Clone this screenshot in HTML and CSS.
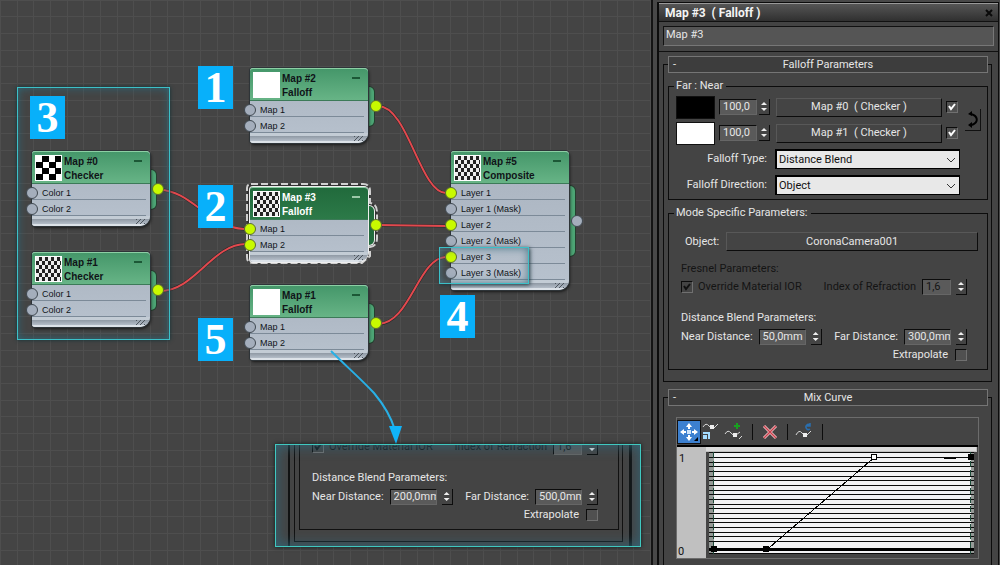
FILE: index.html
```
<!DOCTYPE html>
<html lang="en">
<head>
    <meta charset="UTF-8">
    <meta name="viewport" content="width=device-width, initial-scale=1.0">
    <title>Map #3 ( Falloff )</title>
    <link rel="stylesheet" href="styles.css">
</head>
<body>
    <main class="canvas">
        <!-- Wires -->
        <svg class="layer" aria-hidden="true">
            <g class="wire-shadow">
                <path d="M160 190C190 190 210 228 244 229M160 291C195 291 212 244 246 244M378 106C408 106 420 193 446 193M378 225L446 226M378 324C410 324 418 258 446 257"/>
            </g>
            <g class="wire">
                <path d="M160 190C190 190 210 228 244 229M160 291C195 291 212 244 246 244M378 106C408 106 420 193 446 193M378 225L446 226M378 324C410 324 418 258 446 257"/>
            </g>
        </svg>

        <div class="highlight highlight-checkers"></div>

        <!-- Nodes -->
        <article class="node node-map0">
            <span class="tab"></span>
            <div class="node-body">
                <header class="node-head">
                    <span class="thumb checks"></span>
                    <h2>Map #0<br>Checker</h2>
                    <button class="collapse" aria-label="Collapse"></button>
                </header>
                <ul>
                    <li><i class="socket"></i>Color 1</li>
                    <li><i class="socket"></i>Color 2</li>
                </ul>
                <div class="node-foot"></div>
            </div>
            <i class="socket out on"></i>
        </article>

        <article class="node node-map1">
            <span class="tab"></span>
            <div class="node-body">
                <header class="node-head">
                    <span class="thumb checks fine"></span>
                    <h2>Map #1<br>Checker</h2>
                    <button class="collapse" aria-label="Collapse"></button>
                </header>
                <ul>
                    <li><i class="socket"></i>Color 1</li>
                    <li><i class="socket"></i>Color 2</li>
                </ul>
                <div class="node-foot"></div>
            </div>
            <i class="socket out on"></i>
        </article>

        <article class="node node-map2">
            <span class="tab"></span>
            <div class="node-body">
                <header class="node-head">
                    <span class="thumb"></span>
                    <h2>Map #2<br>Falloff</h2>
                    <button class="collapse" aria-label="Collapse"></button>
                </header>
                <ul>
                    <li><i class="socket"></i>Map 1</li>
                    <li><i class="socket"></i>Map 2</li>
                </ul>
                <div class="node-foot"></div>
            </div>
            <i class="socket out on"></i>
        </article>

        <article class="node node-map3 selected">
            <svg class="outline" viewBox="0 0 134 84" aria-hidden="true">
                <path d="M6 2H118Q125 2 125 9V21Q132 22 132 30V56Q132 64 125 65V74L117 81H8Q2 81 2 75V6Q2 2 6 2Z"/>
            </svg>
            <span class="tab"></span>
            <div class="node-body">
                <header class="node-head">
                    <span class="thumb checks fine"></span>
                    <h2>Map #3<br>Falloff</h2>
                    <button class="collapse" aria-label="Collapse"></button>
                </header>
                <ul>
                    <li><i class="socket on"></i>Map 1</li>
                    <li><i class="socket on"></i>Map 2</li>
                </ul>
                <div class="node-foot"></div>
            </div>
            <i class="socket out on"></i>
        </article>

        <article class="node node-map1b">
            <span class="tab"></span>
            <div class="node-body">
                <header class="node-head">
                    <span class="thumb"></span>
                    <h2>Map #1<br>Falloff</h2>
                    <button class="collapse" aria-label="Collapse"></button>
                </header>
                <ul>
                    <li><i class="socket"></i>Map 1</li>
                    <li><i class="socket"></i>Map 2</li>
                </ul>
                <div class="node-foot"></div>
            </div>
            <i class="socket out on"></i>
        </article>

        <article class="node node-map5 tall">
            <span class="tab"></span>
            <div class="node-body">
                <header class="node-head">
                    <span class="thumb checks fine"></span>
                    <h2>Map #5<br>Composite</h2>
                    <button class="collapse" aria-label="Collapse"></button>
                </header>
                <ul>
                    <li><i class="socket on"></i>Layer 1</li>
                    <li><i class="socket"></i>Layer 1 (Mask)</li>
                    <li><i class="socket on"></i>Layer 2</li>
                    <li><i class="socket"></i>Layer 2 (Mask)</li>
                    <li><i class="socket on"></i>Layer 3</li>
                    <li><i class="socket"></i>Layer 3 (Mask)</li>
                </ul>
                <div class="node-foot"></div>
            </div>
            <i class="socket out"></i>
        </article>

        <div class="highlight highlight-layer"></div>

        <!-- Step numbers -->
        <span class="badge badge-1">1</span>
        <span class="badge badge-2">2</span>
        <span class="badge badge-3">3</span>
        <span class="badge badge-4">4</span>
        <span class="badge badge-5">5</span>

        <!-- Cut-out of the second falloff's parameters -->
        <section class="callout">
            <div class="callout-rails">
                <div class="callout-rollup">
                    <div class="callout-group">
                        <div class="row off">
                            <label class="check"><input type="checkbox" checked disabled>Override Material IOR</label>
                            <label class="field">Index of Refraction
                                <span class="spinner"><input class="short" type="text" value="1,6" disabled><span class="arrows"><button aria-label="Up"></button><button aria-label="Down"></button></span></span>
                            </label>
                        </div>
                        <h3 class="distance-title">Distance Blend Parameters:</h3>
                        <div class="row">
                            <label class="field">Near Distance:
                                <span class="spinner"><input type="text" value="200,0mm"><span class="arrows"><button aria-label="Up"></button><button aria-label="Down"></button></span></span>
                            </label>
                            <label class="field">Far Distance:
                                <span class="spinner"><input type="text" value="500,0mm"><span class="arrows"><button aria-label="Up"></button><button aria-label="Down"></button></span></span>
                            </label>
                        </div>
                        <label class="extrapolate">Extrapolate<input type="checkbox"></label>
                    </div>
                </div>
            </div>
        </section>

        <svg class="layer" aria-hidden="true">
            <path class="arrow-line" d="M331 351C346 366 361 379 374 393C384 405 391 417 395 430"/>
            <path class="arrow-head" d="M389 426H402L396 444Z"/>
        </svg>
    </main>

    <aside class="panel">
        <div class="window">
            <header class="titlebar">
                <h1>Map #3&nbsp; ( Falloff )</h1>
                <button class="close" aria-label="Close">
                    <svg viewBox="0 0 8 8" width="8" height="8"><path d="M1 1L7 7M7 1L1 7"/></svg>
                </button>
            </header>
            <div class="name-row">
                <input class="name" type="text" value="Map #3" aria-label="Map name">
            </div>

            <div class="rollups">
                <fieldset class="rollup">
                    <legend><button class="rollup-head"><span>-</span>Falloff Parameters</button></legend>

                    <fieldset class="group">
                        <legend>Far : Near</legend>
                        <div class="maps">
                            <div class="map-rows">
                                <div class="map-row">
                                    <button class="swatch black" aria-label="Far color"></button>
                                    <span class="spinner"><input class="amount" type="text" value="100,0" aria-label="Far amount"><span class="arrows"><button aria-label="Up"></button><button aria-label="Down"></button></span></span>
                                    <button class="map-button">Map #0&nbsp; ( Checker )</button>
                                    <input type="checkbox" checked aria-label="Use far map">
                                </div>
                                <div class="map-row">
                                    <button class="swatch white" aria-label="Near color"></button>
                                    <span class="spinner"><input class="amount" type="text" value="100,0" aria-label="Near amount"><span class="arrows"><button aria-label="Up"></button><button aria-label="Down"></button></span></span>
                                    <button class="map-button">Map #1&nbsp; ( Checker )</button>
                                    <input type="checkbox" checked aria-label="Use near map">
                                </div>
                            </div>
                            <button class="swap" aria-label="Swap">
                                <svg viewBox="0 0 16 22" width="16" height="22">
                                    <path class="stroke" d="M6 5C13 7 14 13 7 16"/>
                                    <path d="M3 5L7 2V7ZM3 16L7 13V19Z"/>
                                </svg>
                            </button>
                        </div>
                        <div class="select-row">
                            <label for="type">Falloff Type:</label>
                            <select id="type"><option>Distance Blend</option></select>
                        </div>
                        <div class="select-row">
                            <label for="direction">Falloff Direction:</label>
                            <select id="direction"><option>Object</option></select>
                        </div>
                    </fieldset>

                    <fieldset class="group mode">
                        <legend>Mode Specific Parameters:</legend>
                        <div class="object-row">
                            <span>Object:</span>
                            <button class="map-button">CoronaCamera001</button>
                        </div>
                        <h3 class="off">Fresnel Parameters:</h3>
                        <div class="row off">
                            <label class="check"><input type="checkbox" checked disabled>Override Material IOR</label>
                            <label class="field">Index of Refraction
                                <span class="spinner"><input class="short" type="text" value="1,6" disabled><span class="arrows"><button aria-label="Up"></button><button aria-label="Down"></button></span></span>
                            </label>
                        </div>
                        <h3 class="distance-title">Distance Blend Parameters:</h3>
                        <div class="row">
                            <label class="field">Near Distance:
                                <span class="spinner"><input type="text" value="50,0mm"><span class="arrows"><button aria-label="Up"></button><button aria-label="Down"></button></span></span>
                            </label>
                            <label class="field">Far Distance:
                                <span class="spinner"><input type="text" value="300,0mm"><span class="arrows"><button aria-label="Up"></button><button aria-label="Down"></button></span></span>
                            </label>
                        </div>
                        <label class="extrapolate">Extrapolate<input type="checkbox"></label>
                    </fieldset>
                </fieldset>

                <fieldset class="rollup">
                    <legend><button class="rollup-head"><span>-</span>Mix Curve</button></legend>
                    <div class="curve">
                        <div class="toolbar">
                            <button class="tool active" aria-label="Move">
                                <svg viewBox="0 0 22 22" width="22" height="22">
                                    <path fill="#fff" d="M11 2L14 6H12V8H10V6H8ZM11 20L8 16H10V14H12V16H14ZM2 11L6 8V10H8V12H6V14ZM20 11L16 14V12H14V10H16V8Z"/>
                                    <rect x="9" y="9" width="4" height="4" fill="#cfe4fa"/>
                                    <path fill="#000" d="M20 16V20H16Z"/>
                                </svg>
                            </button>
                            <button class="tool" aria-label="Scale">
                                <svg viewBox="0 0 22 22" width="22" height="22">
                                    <path class="squiggle" d="M2 6Q5 1 8 5T13 7L17 3"/>
                                    <rect x="9" y="4" width="4" height="4" fill="#eee"/>
                                    <path fill="#a5dcff" d="M2 11H9V18H7V13H2ZM2 14H6V18H2Z"/>
                                </svg>
                            </button>
                            <button class="tool" aria-label="Add point">
                                <svg viewBox="0 0 22 22" width="22" height="22">
                                    <path class="squiggle" d="M1 13Q4 8 7 12T12 14L16 11M15 18L18 15"/>
                                    <rect x="9" y="12" width="4" height="4" fill="#eee"/>
                                    <path fill="#18a020" d="M12 2H14V4H16V6H14V8H12V6H10V4H12Z"/>
                                </svg>
                            </button>
                            <i class="divider"></i>
                            <button class="tool" aria-label="Delete point">
                                <svg viewBox="0 0 22 22" width="22" height="22">
                                    <path d="M5 5L17 17M17 5L5 17" stroke="#f2c4c8" stroke-width="3"/>
                                    <path d="M5 5L17 17M17 5L5 17" stroke="#c8404c" stroke-width="1.4"/>
                                </svg>
                            </button>
                            <i class="divider"></i>
                            <button class="tool" aria-label="Reset curve">
                                <svg viewBox="0 0 22 22" width="22" height="22">
                                    <path class="squiggle" d="M2 14Q5 8 8 12T13 14L17 10"/>
                                    <rect x="9" y="12" width="4" height="4" fill="#eee"/>
                                    <path d="M16 8A2.500 2.500 0 1 1 16 4M16 2V5H13" fill="none" stroke="#2a6faf" stroke-width="1.500"/>
                                </svg>
                            </button>
                            <i class="divider"></i>
                        </div>
                        <svg class="plot" viewBox="0 0 300 111" shape-rendering="crispEdges" role="img" aria-label="Mix curve">
                            <path fill="#c0c0c0" d="M0 0H299V5H29V111H0Z"/>
                            <path fill="#444" d="M29 5H299V0H300V111H29Z"/>
                            <rect x="29" y="0" width="269" height="4" fill="#dcdcdc"/>
                            <rect x="32" y="5" width="264" height="102" fill="#f2f2f4"/>
                            <rect x="32" y="5" width="5" height="102" fill="#959a97"/>
                            <rect x="293" y="5" width="3" height="102" fill="#959a97"/>
                            <path stroke="#0a0a0a" d="M32 5.500h264m-264 5h264m-264 5h264m-264 4h264m-264 5h264m-264 5h264m-264 4h264m-264 5h264m-264 5h264m-264 4h264m-264 5h264m-264 5h264m-264 4h264m-264 5h264m-264 5h264m-264 4h264m-264 5h264m-264 5h264m-264 4h264m-264 5h264m-264 12h264"/>
                            <path stroke="#1c4a38" stroke-dasharray="6 3" d="M36.500 5V107M292.500 5V107"/>
                            <rect x="32" y="101" width="264" height="3" fill="#000"/>
                            <path stroke="#000" d="M90 102L196 11M266 11.500H278"/>
                            <path fill="#000" d="M34 99h6v6h-6zM86 99h6v6h-6zM290 7h6v6h-6z"/>
                            <rect x="193.500" y="7.500" width="5" height="5" fill="#fff" stroke="#000"/>
                            <text x="2" y="15">1</text>
                            <text x="1" y="108">0</text>
                        </svg>
                    </div>
                </fieldset>
            </div>
        </div>
    </aside>
</body>
</html>
```
FILE: styles.css
```
* {
    margin: 0;
    padding: 0;
    box-sizing: border-box;
}

body {
    display: flex;
    height: 100vh;
    overflow: hidden;
    background: #444;
    color: #e6e6e6;
    font-family: Roboto, Tahoma, sans-serif;
    font-size: 11px;
    line-height: 12px;
}

button,
input,
select {
    font: inherit;
    color: inherit;
    background: none;
    border: 0;
    border-radius: 0;
}

h1,
h2,
h3 {
    font-size: inherit;
    font-weight: normal;
}

/* Node canvas */
.canvas {
    flex: 1;
    position: relative;
    overflow: hidden;
    background-color: #444;
    background-image:
        linear-gradient(to right, #4e4e4e 1px, transparent 1px),
        linear-gradient(to right, #4e4e4e 1px, transparent 1px),
        linear-gradient(to right, #4e4e4e 1px, transparent 1px),
        linear-gradient(#4e4e4e 1px, transparent 1px),
        linear-gradient(#4e4e4e 1px, transparent 1px),
        linear-gradient(#4e4e4e 1px, transparent 1px);
    background-size: 50px 50px;
    background-position: 0 0, 17px 0, 33px 0, 0 0, 0 16px, 0 33px;
}

.layer {
    position: absolute;
    inset: 0;
    width: 100%;
    height: 100%;
    fill: none;
    pointer-events: none;
}

.wire-shadow {
    stroke: #26292a;
    stroke-width: 3;
}

.wire {
    stroke: #e2494e;
    stroke-width: 2;
}

.arrow-line {
    stroke: #28b0e6;
    stroke-width: 2;
}

.arrow-head {
    fill: #10b4fa;
}

.node {
    position: absolute;
    width: 118px;
    color: #101418;
    font-family: "Liberation Sans", Arial, sans-serif;
}

.node-map0 { left: 32px; top: 151px; }
.node-map1 { left: 32px; top: 252px; }
.node-map2 { left: 250px; top: 68px; }
.node-map3 { left: 250px; top: 187px; }
.node-map1b { left: 250px; top: 285px; }
.node-map5 { left: 451px; top: 151px; }

.node-body {
    position: relative;
    background: linear-gradient(#a9b3bf, #b8c2ce);
    border-radius: 3px 4px 10px 3px;
    box-shadow: 0 0 0 1px #2e3438, 1px 2px 3px #181818;
}

.node-head {
    display: flex;
    gap: 2px;
    height: 33px;
    padding: 3px 8px 0 3px;
    border-top: 1px solid #8ccfa4;
    border-bottom: 1px solid #3c7a58;
    border-radius: 3px 4px 0 0;
    background: linear-gradient(#45976a, #67b486);
}

.node-head h2 {
    flex: 1;
    font-size: 10px;
    font-weight: bold;
    line-height: 14px;
}

.thumb {
    width: 27px;
    height: 26px;
    border: 1px solid #fff;
    background: #fff;
}

.checks {
    background: conic-gradient(#000 25%, #fff 0 50%, #000 0 75%, #fff 0) 0 0 / 13px 12px;
}

.checks.fine {
    background: conic-gradient(#222 25%, #eee 0 50%, #222 0 75%, #eee 0) 0 0 / 6px 8px;
}

.collapse {
    width: 8px;
    height: 2px;
    margin-top: 5px;
    background: #1c5836;
}

.node ul {
    list-style: none;
}

.node li {
    position: relative;
    height: 16px;
    margin-right: 4px;
    padding-left: 10px;
    border-bottom: 1px solid #7c8a98;
    font-size: 9px;
    line-height: 18px;
}

.node-foot {
    height: 10px;
    border-top: 3px solid #c3ccd5;
    border-radius: 0 0 10px 3px;
    background:
        repeating-linear-gradient(135deg, #4c545c 0 1px, transparent 1px 3px) right 5px top 0 / 9px 5px no-repeat,
        linear-gradient(#8f99a4, #b4bdc8 5px, #dce2e8 5px);
}

.socket {
    position: absolute;
    left: -6px;
    top: 3px;
    width: 12px;
    height: 12px;
    border: 1px solid #3f4850;
    border-radius: 50%;
    background: #a4aebc;
}

.socket.on {
    background: #c8fa00;
    border-color: #5a6c30;
}

.socket.out {
    left: auto;
    right: -14px;
    top: 32px;
}

.tall .socket.out {
    top: 64px;
}

.tab {
    position: absolute;
    left: 110px;
    top: 19px;
    width: 14px;
    height: 39px;
    border-radius: 5px;
    background: #4ca474;
    box-shadow: 0 0 0 1px #24402f;
}

.tall .tab {
    top: 35px;
    height: 70px;
}

.selected .node-head {
    color: #fff;
    background: linear-gradient(#216a3c, #2c7a48);
}

.selected .node-body,
.selected .tab {
    box-shadow: 0 0 0 1px #eee;
}

.selected .tab {
    background: #216a3c;
}

.selected .collapse {
    background: #9cc8a8;
}

.outline {
    position: absolute;
    left: -5px;
    top: -5px;
    width: 134px;
    height: 84px;
    fill: #333;
    stroke: #d0d0d0;
    stroke-width: 2;
    stroke-dasharray: 7 3;
}

.highlight {
    position: absolute;
    border: 1px solid #3cc0c8;
    box-shadow: inset 0 0 9px #2c6878, 0 0 4px #123238;
}

.highlight-checkers {
    left: 17px;
    top: 87px;
    width: 153px;
    height: 253px;
}

.highlight-layer {
    left: 439px;
    top: 247px;
    width: 90px;
    height: 37px;
    box-shadow: inset 0 0 8px #4c7888, 1px 1px 4px #203840;
}

.badge {
    position: absolute;
    width: 35px;
    height: 43px;
    background: #08b0fa;
    color: #fff;
    font: bold 44px/43px "Liberation Serif", "Times New Roman", serif;
    text-align: center;
}

.badge-1 { left: 198px; top: 66px; }
.badge-2 { left: 198px; top: 185px; }
.badge-3 { left: 30px; top: 96px; }
.badge-4 { left: 440px; top: 295px; }
.badge-5 { left: 198px; top: 318px; }

.callout {
    position: absolute;
    left: 275px;
    top: 444px;
    width: 366px;
    height: 103px;
    padding: 0 8px 0 12px;
    display: flex;
    flex-direction: column;
    justify-content: flex-end;
    overflow: hidden;
    background: #444;
    border: 1px solid #40c8c0;
    box-shadow: 0 0 4px #101c1c;
}

.callout::after {
    content: "";
    position: absolute;
    inset: 0;
    box-shadow: inset 0 0 14px #30687c;
    pointer-events: none;
}

.callout-rails {
    padding: 0 6px 4px 4px;
    border: solid #111;
    border-width: 0 3px 0 2px;
}

.callout-rollup {
    padding: 0 3px 11px 4px;
    border: 1px solid #111;
    border-top: 0;
}

.callout-group {
    padding: 0 20px 8px 12px;
    border: 1px solid #111;
    border-top: 0;
}

/* Parameter panel */
.panel {
    flex: 0 0 349px;
    padding: 2px 1px 0 4px;
    border-left: 2px solid #141414;
    background: #484848;
}

.window {
    height: 100%;
    overflow: hidden;
    border: solid #0c0c0c;
    border-width: 1px 1px 0 2px;
    background: #444;
}

.titlebar {
    display: flex;
    justify-content: space-between;
    align-items: center;
    height: 19px;
    padding: 0 5px 0 6px;
    border-top: 1px solid #999;
    border-bottom: 1px solid #111;
    background: linear-gradient(#555, #303030);
}

.titlebar h1 {
    font-size: 12px;
    font-weight: bold;
    color: #f4f4f4;
}

.close {
    width: 8px;
    height: 8px;
    line-height: 0;
}

.close path {
    stroke: #0a0a0a;
    stroke-width: 2;
}

.name-row {
    padding: 4px 4px 5px;
    border-bottom: 1px solid #111;
}

.name {
    display: block;
    width: 100%;
    height: 20px;
    padding: 0 2px 3px;
    background: #555;
    border: 1px solid;
    border-color: #111 #777 #777 #111;
}

.rollups {
    padding: 4px 6px 0 4px;
}

.rollup {
    padding: 7px 3px 11px 4px;
    border: 1px solid #0c0c0c;
    margin-bottom: 7px;
}

.rollup > legend {
    width: 100%;
}

.rollup-head {
    position: relative;
    display: block;
    width: 100%;
    height: 17px;
    border: 1px solid #757575;
    background: #3d3d3d;
    text-align: center;
    line-height: 14px;
}

.rollup-head span {
    position: absolute;
    left: 4px;
}

.group {
    padding: 2px 6px 1px 7px;
    border: 1px solid #0c0c0c;
}

.group > legend {
    padding: 0 3px 0 2px;
    margin-left: -2px;
}

.maps {
    display: flex;
    align-items: center;
    gap: 7px;
}

.map-rows {
    flex: 1;
}

.map-row {
    display: flex;
    align-items: center;
    gap: 4px;
    height: 26px;
}

.swatch {
    width: 39px;
    height: 23px;
    border: 1px solid #111;
}

.black {
    background: #000;
}

.white {
    background: #fff;
}

.map-button {
    flex: 1;
    height: 19px;
    border: 1px solid;
    border-color: #585858 #0c0c0c #0c0c0c #585858;
    line-height: 16px;
}

.map-row .map-button {
    margin-left: 2px;
}

.swap {
    width: 16px;
    height: 22px;
    border-right: 1px solid #111;
    border-bottom: 1px solid #111;
}

.swap svg {
    display: block;
}

.swap .stroke {
    fill: none;
    stroke: #000;
    stroke-width: 2;
}

.spinner {
    display: inline-flex;
    align-items: center;
    gap: 2px;
}

.spinner input {
    width: 47px;
    height: 16px;
    padding: 0 0 1px 3px;
    background: #5a5a5a;
    border: 1px solid;
    border-color: #0c0c0c #666 #666 #0c0c0c;
}

.spinner .amount {
    width: 38px;
}

.spinner .short {
    width: 29px;
}

.field .spinner {
    gap: 5px;
}

.arrows {
    display: flex;
    flex-direction: column;
    align-items: center;
    justify-content: space-between;
    width: 11px;
    height: 16px;
    padding: 3px 0;
    border: solid #0c0c0c;
    border-width: 0 1px 1px 0;
}

.arrows button {
    width: 6px;
    height: 3px;
    background: #eee;
    clip-path: polygon(50% 0, 100% 100%, 0 100%);
}

.arrows button:last-child {
    clip-path: polygon(0 0, 100% 0, 50% 100%);
}

input[type="checkbox"] {
    appearance: none;
    flex: none;
    width: 12px;
    height: 12px;
    background: #505050;
    border: 1px solid;
    border-color: #0c0c0c #707070 #707070 #0c0c0c;
}

input[type="checkbox"]:checked {
    background: #505050 url("data:image/svg+xml,%3Csvg xmlns='http://www.w3.org/2000/svg' viewBox='0 0 10 10'%3E%3Cpath d='M2 4L4 7L8 2' fill='none' stroke='%23fff' stroke-width='2'/%3E%3C/svg%3E");
}

input[type="checkbox"]:disabled {
    background: url("data:image/svg+xml,%3Csvg xmlns='http://www.w3.org/2000/svg' viewBox='0 0 10 10'%3E%3Cpath d='M2 4L4 7L8 2' fill='none' stroke='%23111' stroke-width='2'/%3E%3C/svg%3E");
}

.select-row {
    display: flex;
    align-items: center;
    gap: 8px;
    height: 26px;
    padding-right: 21px;
}

.select-row label {
    width: 91px;
    text-align: right;
}

.select-row select {
    flex: 1;
    height: 20px;
    padding: 0 2px;
    appearance: none;
    border: 2px solid #000;
    border-width: 2px 1px 1px 2px;
    color: #111;
    background: #e8e8e8 url("data:image/svg+xml,%3Csvg xmlns='http://www.w3.org/2000/svg' width='10' height='6'%3E%3Cpath d='M1 1L5 5L9 1' fill='none' stroke='%23333'/%3E%3C/svg%3E") right 3px center no-repeat;
}

.mode {
    margin-top: 7px;
    padding: 13px 20px 8px 12px;
}

.mode > legend {
    margin-left: -7px;
}

.object-row {
    display: flex;
    align-items: center;
    gap: 7px;
    margin: 0 -11px 12px 4px;
}

.row {
    display: flex;
    align-items: center;
    justify-content: space-between;
    height: 16px;
}

.off {
    color: #141414;
}

h3.off {
    margin-bottom: 4px;
}

.distance-title {
    margin: 17px 0 5px;
}

.check,
.field,
.extrapolate {
    display: flex;
    align-items: center;
    gap: 6px;
}

.check {
    gap: 5px;
}

.extrapolate {
    justify-content: flex-end;
    gap: 7px;
    margin-top: 4px;
}

.curve {
    margin: 4px 9px 12px 8px;
    border: 1px solid #6c6c6c;
}

.toolbar {
    display: flex;
    align-items: center;
    gap: 1px;
    height: 29px;
    padding: 0 1px;
    border-bottom: 2px solid #000;
}

.tool {
    width: 22px;
    height: 22px;
}

.tool svg {
    display: block;
}

.tool.active {
    background: #3c80d0;
    outline: 1px solid #111;
}

.squiggle {
    fill: none;
    stroke: #d8d8d8;
    stroke-width: 1;
}

.divider {
    width: 1px;
    height: 16px;
    margin: 0 5px;
    background: #0c0c0c;
}

.plot {
    display: block;
    width: 100%;
}

.plot text {
    font-size: 11px;
    fill: #111;
}
```
